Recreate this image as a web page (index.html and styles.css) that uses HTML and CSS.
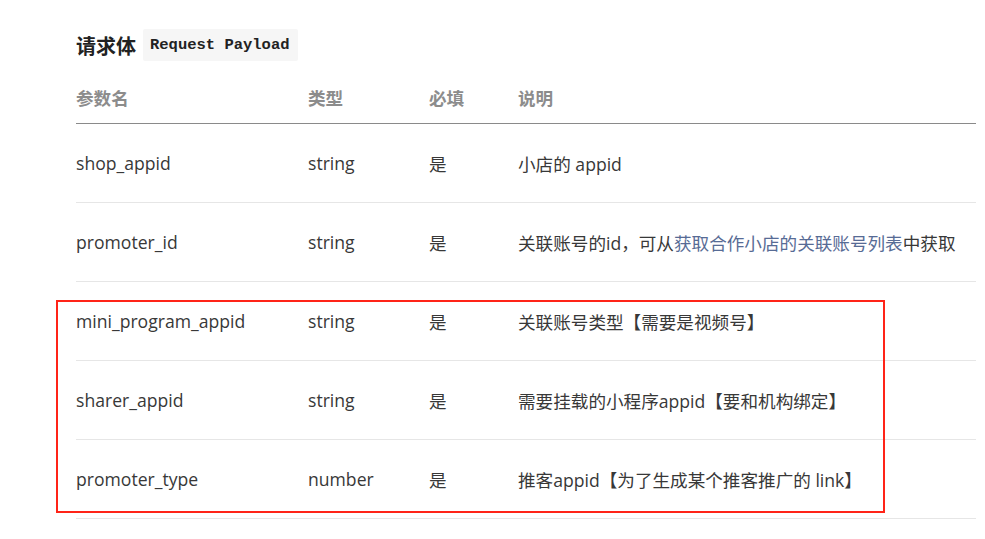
FILE: index.html
```html
<!DOCTYPE html>
<html lang="zh-CN">
<head>
<meta charset="utf-8">
<title>请求体</title>
<link rel="stylesheet" href="styles.css">
</head>
<body>
<div class="page">
  <h3 class="title">请求体 <code class="badge">Request Payload</code></h3>
  <table class="params">
    <colgroup>
      <col class="c1"><col class="c2"><col class="c3"><col class="c4">
    </colgroup>
    <thead>
      <tr><th>参数名</th><th>类型</th><th>必填</th><th>说明</th></tr>
    </thead>
    <tbody>
      <tr><td>shop_appid</td><td>string</td><td>是</td><td>小店的 appid</td></tr>
      <tr><td>promoter_id</td><td>string</td><td>是</td><td>关联账号的id，可从<a class="link" href="#">获取合作小店的关联账号列表</a>中获取</td></tr>
      <tr><td>mini_program_appid</td><td>string</td><td>是</td><td>关联账号类型【需要是视频号】</td></tr>
      <tr><td>sharer_appid</td><td>string</td><td>是</td><td>需要挂载的小程序appid【要和机构绑定】</td></tr>
      <tr><td>promoter_type</td><td>number</td><td>是</td><td>推客appid【为了生成某个推客推广的 link】</td></tr>
    </tbody>
  </table>
  <div class="highlight"></div>
</div>
</body>
</html>
```
FILE: styles.css
```css
html, body {
  margin: 0;
  padding: 0;
  background: #ffffff;
}
body {
  font-family: "Open Sans", "Noto Sans CJK SC", sans-serif;
  color: #383838;
}
.page {
  position: relative;
  padding: 29px 0 0 76px;
  width: 900px;
}
.title {
  margin: 0;
  display: flex;
  align-items: center;
  gap: 7px;
  font-size: 20px;
  font-weight: 700;
  color: #222222;
  height: 32px;
  font-family: "Noto Sans CJK SC", sans-serif;
}
.badge {
  font-family: "Liberation Mono", monospace;
  font-size: 15.5px;
  font-weight: 700;
  background: #f6f6f6;
  color: #222222;
  padding: 0 8px 0 7px;
  height: 32px;
  line-height: 32px;
  border-radius: 2px;
}
.params {
  width: 900px;
  margin-top: 11px;
  border-collapse: collapse;
  table-layout: fixed;
  font-size: 17.6px;
}
.c1 { width: 232px; }
.c2 { width: 121px; }
.c3 { width: 89px; }
.params th {
  text-align: left;
  font-weight: 700;
  color: #8c8c8c;
  height: 51px;
  padding: 0;
  vertical-align: middle;
  border-bottom: 1px solid #8a8a8a;
  font-family: "Noto Sans CJK SC", sans-serif;
  font-size: 17.6px;
}
.params td {
  height: 78px;
  padding: 0;
  vertical-align: middle;
  border-bottom: 1px solid #e6e6e6;
  white-space: nowrap;
}
.link {
  color: #576b95;
  text-decoration: none;
}
.highlight {
  position: absolute;
  left: 56px;
  top: 300px;
  width: 825px;
  height: 209px;
  border: 2px solid #ff2418;
  pointer-events: none;
}
```
